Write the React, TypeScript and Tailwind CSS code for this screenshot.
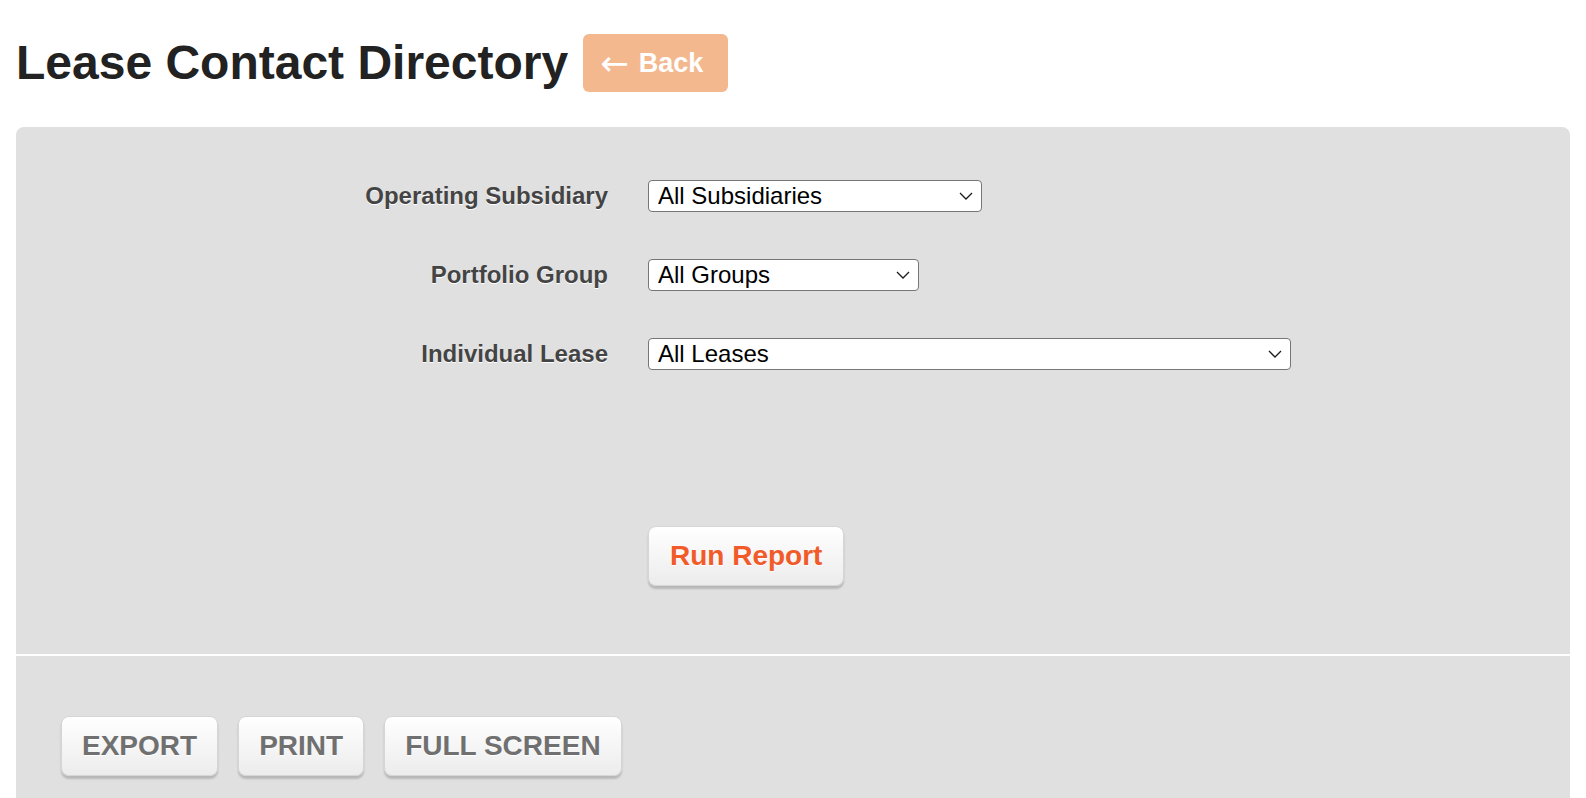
import { useState } from "react";

type Filter = {
  label: string;
  width: string;
  options: string[];
};

const filters: Filter[] = [
  {
    label: "Operating Subsidiary",
    width: "w-[334px]",
    options: ["All Subsidiaries"],
  },
  {
    label: "Portfolio Group",
    width: "w-[271px]",
    options: ["All Groups"],
  },
  {
    label: "Individual Lease",
    width: "w-[643px]",
    options: ["All Leases"],
  },
];

// shared look for the light, raised buttons
const raisedBtn =
  "bg-gradient-to-b from-white to-[#ececec] border border-[#d6d6d6] rounded-[8px] shadow-[0_3px_2px_rgba(0,0,0,0.18)] font-bold [text-shadow:0_1px_0_#fff]";

function Chevron() {
  return (
    <svg
      width="14"
      height="8"
      viewBox="0 0 14 8"
      fill="none"
      className="pointer-events-none absolute right-[9px] top-1/2 -translate-y-1/2"
    >
      <path d="M1 1l6 6 6-6" stroke="#1a1a1a" strokeWidth="1.3" />
    </svg>
  );
}

export default function App() {
  const [values, setValues] = useState<string[]>(
    filters.map((f) => f.options[0])
  );

  const handleChange = (idx: number, value: string) => {
    const updated = [...values];
    updated[idx] = value;
    setValues(updated);
  };

  return (
    <div className="min-h-screen bg-white px-4 font-['Liberation_Sans',Arial,sans-serif]">
      {/* Header */}
      <div className="flex items-center gap-[15px] pt-[34px]">
        <h1 className="text-[48px] font-bold leading-[58px] text-[#222]">
          Lease Contact Directory
        </h1>
        <button
          type="button"
          className="flex h-[58px] items-center gap-[10px] rounded-[6px] bg-[#f4b88f] pl-[17px] pr-[25px] text-[27px] font-bold text-white"
        >
          <span className="font-['DejaVu_Sans',sans-serif] text-[34px] font-normal leading-none">
            ←
          </span>
          <span>Back</span>
        </button>
      </div>

      {/* Filter panel */}
      <div className="mt-[35px] rounded-t-[8px] bg-[#e0e0e0]">
        <div className="pt-[53px] pb-[68px]">
          <div className="flex flex-col gap-[47px]">
            {filters.map((f, idx) => (
              <div key={f.label} className="flex items-center">
                <label className="w-[592px] text-right text-[24px] font-bold leading-[32px] text-[#444] [text-shadow:0_1px_0_#fff]">
                  {f.label}
                </label>
                <div className={`relative ml-[40px] ${f.width}`}>
                  <select
                    value={values[idx]}
                    onChange={(e) => handleChange(idx, e.target.value)}
                    className="h-[32px] w-full appearance-none rounded-[4px] border border-[#767676] bg-white pl-[9px] text-[24px] leading-[30px] text-black"
                  >
                    {f.options.map((o) => (
                      <option key={o}>{o}</option>
                    ))}
                  </select>
                  <Chevron />
                </div>
              </div>
            ))}
          </div>

          <div className="ml-[632px] mt-[156px]">
            <button
              type="button"
              className={`${raisedBtn} h-[60px] px-[21px] text-[28px] text-[#f15a29]`}
            >
              Run Report
            </button>
          </div>
        </div>

        {/* Divider */}
        <div className="h-[2px] bg-white" />

        {/* Output actions */}
        <div className="flex gap-[20px] px-[45px] pt-[60px] pb-[40px]">
          <button
            type="button"
            className={`${raisedBtn} h-[60px] px-[20px] text-[28px] text-[#707070]`}
          >
            EXPORT
          </button>
          <button
            type="button"
            className={`${raisedBtn} h-[60px] px-[20px] text-[28px] text-[#707070]`}
          >
            PRINT
          </button>
          <button
            type="button"
            className={`${raisedBtn} h-[60px] px-[20px] text-[28px] text-[#707070]`}
          >
            FULL SCREEN
          </button>
        </div>
      </div>
    </div>
  );
}
